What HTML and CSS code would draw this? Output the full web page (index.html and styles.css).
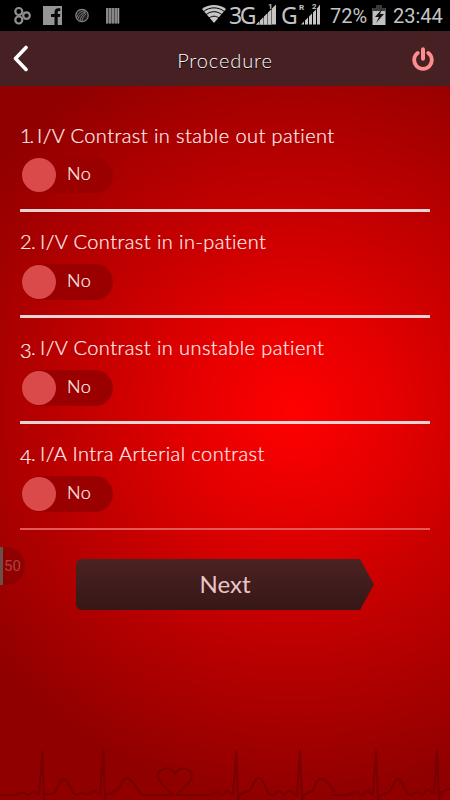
FILE: index.html
```html
<!DOCTYPE html>
<html lang="en">
<head>
    <meta charset="UTF-8">
    <meta name="viewport" content="width=device-width, initial-scale=1.0">
    <title>Procedure</title>
    <link rel="stylesheet" href="styles.css">
</head>
<body>
    <div class="screen">
        <!-- Status bar -->
        <div class="status-bar">
            <svg class="status-left" width="130" height="31" viewBox="0 0 130 31">
                <g fill="none" stroke="#909090" stroke-width="2.2">
                    <circle cx="18.800" cy="11.500" r="3.500"/>
                    <circle cx="18.800" cy="20" r="3.500"/>
                    <circle cx="26.500" cy="15.600" r="3.300"/>
                </g>
                <rect x="43" y="6" width="19" height="19" fill="#959595"/>
                <path d="M54.500 25v-8h-3.500v-3h3.500v-1.500c0-3 1.500-4.300 4-4.300h1.800v2.800h-1c-1.300 0-1.600.500-1.600 1.600v1.400h2.600l-.4 3h-2.200V25z" fill="#080808"/>
                <circle cx="82" cy="15.500" r="6.200" fill="#202020" stroke="#858585" stroke-width="1.200"/>
                <path d="M77 17c1-4 4-6 8-6M78 19c1-4 4-6 8-7M80 21c0-4 3-6 5-8M82 21c0-3 2-5 4-7" fill="none" stroke="#808080" stroke-width="0.900"/>
                <rect x="106" y="8" width="13" height="15.500" fill="#505050"/>
                <path d="M107 8v15.500M110 8v15.500M113 8v15.500M116 8v15.500M118.500 8v15.500" stroke="#9a9a9a" stroke-width="1.500"/>
            </svg>
            <div class="status-right">
                <svg class="wifi" width="26" height="31" viewBox="0 0 26 31">
                    <path d="M1 9C7.500 3.800 18.500 3.800 25 9L13 23z" fill="#c6c6c6"/>
                    <path d="M2.500 11.600c6-5 15-5 21 0M5 14.700c4.800-4 11.200-4 16 0M8 18.100c3.200-2.500 6.800-2.500 10 0" fill="none" stroke="#000" stroke-width="1"/>
                </svg>
                <span class="net net-3g">3G</span>
                <svg class="signal" width="21" height="31" viewBox="0 0 21 31">
                    <path d="M0 25L16 9v16z" fill="#686868"/>
                    <path d="M0 24.500l3-3v3zM4 20.500l3-3v7H4zM8 16.500l3-3v11H8zM12 12.500l3-3v15h-3zM16 8.500l4-4v20h-4z" fill="#c4c4c4"/>
                    <text x="12" y="9" class="sim">1</text>
                </svg>
                <span class="net net-g">G</span>
                <svg class="signal signal-roaming" width="22" height="31" viewBox="0 0 22 31">
                    <path d="M2 24.500l3-3v3zM6 20.500l3-3v7H6zM10 16.500l3-3v11h-3zM14 12.500l3-3v15h-3zM18 8.500l3-4v20h-3z" fill="#c4c4c4"/>
                    <text x="0" y="10" class="sim">R</text>
                    <text x="13" y="9" class="sim">2</text>
                </svg>
                <span class="percent">72%</span>
                <svg class="battery" width="14" height="31" viewBox="0 0 14 31">
                    <path d="M4 5h6v3h3.500v17H.5V8H4z" fill="#c0c0c0"/>
                    <path d="M4 5h6v3h3.500v3H.5V8H4z" fill="#3a3a3a"/>
                    <path d="M10 9l-7 8h4l-3 6 8-9H8z" fill="#111"/>
                </svg>
                <span class="clock">23:44</span>
            </div>
        </div>

        <!-- Title bar -->
        <header class="header">
            <svg width="16" height="27" viewBox="0 0 16 27">
                <path d="M13 2.500L2.500 13.500 13 24.500" fill="none" stroke="#fff" stroke-width="3.600" stroke-linejoin="round" stroke-linecap="round"/>
            </svg>
            <h1>Procedure</h1>
            <svg width="22" height="24" viewBox="0 0 22 24">
                <path d="M5.700 6A8.800 8.800 0 1 0 16.300 6" fill="none" stroke="#fe8e8e" stroke-width="3.800" stroke-linecap="round"/>
                <path d="M11 2.300v9.400" stroke="#fe8e8e" stroke-width="4" stroke-linecap="round"/>
            </svg>
        </header>

        <!-- Questions -->
        <main class="content">
            <section class="question q1">
                <h2><span class="num">1.</span>I/V Contrast in stable out patient</h2>
                <div class="toggle"><span class="knob"></span><span class="value">No</span></div>
            </section>
            <section class="question q2">
                <h2><span class="num">2.</span>I/V Contrast in in-patient</h2>
                <div class="toggle"><span class="knob"></span><span class="value">No</span></div>
            </section>
            <section class="question q3">
                <h2><span class="num"><span class="low">3</span>.</span>I/V Contrast in unstable patient</h2>
                <div class="toggle"><span class="knob"></span><span class="value">No</span></div>
            </section>
            <section class="question q4">
                <h2><span class="num"><span class="low">4</span>.</span>I/A Intra Arterial contrast</h2>
                <div class="toggle"><span class="knob"></span><span class="value">No</span></div>
            </section>
            <button class="next"><span>Next</span></button>
        </main>

        <!-- Floating side badge -->
        <div class="side-badge">50</div>

        <!-- Heartbeat line -->
        <svg class="heartbeat" width="450" height="56" viewBox="0 744 450 56">
            <path d="M0 795h14c3 0 5-2.500 8-2.500s3 2.500 6 2.500 3-4 5-4 4 4 6 4l3.300-44 1.700 50 1-7h7c7-2 6-15 12-15 5 0 7 16 12 16 3 0 3-2 6-2s3 1.500 6 1.500 3-3.500 6-3.500 4 4 6 4l3.300-45 1.700 49 2-5 4 0c2-3 4-3 6-4 4-3 5-12 9-12 6 0 9 9 16 17h31c-4-6-15-11-15-19 0-9 14-10 17-2 3-8 17-7 17 2 0 7-11 13-15 19h33c3 0 4-3 7-3 2 0 3 3 5 3s3-4 5-4 4 4 6 4l3.300-44 1.700 50 2-7c5 0 6-3 9-3 4-3 5-13 10-13 6 0 6 17 13 17 3 0 4-3.500 7-3.500s3 3 5 3 3-4 6-4 4 5 7 5l3-45 2 50 2-6c4 0 4-3 8-3 3-3 4-13 8-13 6 0 10 7 15 14" />
            <path d="M333 795h16c4 0 5-3 8-3s3 3 6 3 3-4 5-4 4 4 6 4l3-44 2 50 2-6c6 0 7-2 10-4 3-3 4-12 8-12 6 0 6 17 13 16 3 0 3-3 6-3s3 3 5 3 3-5 6-5 4 3 6 4l3-44 2 49 2-7c4 0 4-3 9-3" transform="translate(-1 0)"/>
        </svg>
    </div>
</body>
</html>
```
FILE: styles.css
```css
/* General Styles */
* {
    box-sizing: border-box;
}

body {
    margin: 0;
    font-family: Lato, "Open Sans", sans-serif;
    font-variant-ligatures: none;
    background: #900000;
}

.screen {
    position: relative;
    width: 450px;
    height: 800px;
    overflow: hidden;
    background: radial-gradient(circle at 293px 412px, #ff0000 0, #e40000 105px, #c60000 200px, #910000 385px);
}

/* Status Bar */
.status-bar {
    display: flex;
    justify-content: space-between;
    height: 31px;
    background: #000;
    color: #c4c4c4;
    font-family: Roboto, sans-serif;
}

.status-right {
    display: flex;
    align-items: flex-start;
    width: 249px;
    line-height: 31px;
}

.net {
    font-family: "Noto Sans", sans-serif;
    font-size: 23px;
    line-height: 30px;
    white-space: nowrap;
}

.net-3g {
    width: 27px;
    margin-left: 2px;
    letter-spacing: -2.5px;
}

.signal {
    flex: none;
}

.net-g {
    width: 18px;
    margin-left: 4px;
}

.sim {
    font: bold 8px Roboto, sans-serif;
    fill: #c4c4c4;
}

.percent {
    width: 38px;
    margin-left: 9px;
    font-size: 20px;
    line-height: 32px;
}

.battery {
    flex: none;
    margin-left: 4px;
}

.clock {
    margin-left: 7px;
    font-size: 20px;
    line-height: 32px;
}

/* Header */
.header {
    display: flex;
    align-items: center;
    justify-content: space-between;
    height: 55px;
    padding: 0 16px 0 13px;
    background: #462022;
}

.header h1 {
    margin: 2px 0 0 9px;
    font-size: 20px;
    font-weight: 300;
    letter-spacing: 0.9px;
    color: #fff;
    text-shadow: 0 1px 1px #000;
}

/* Questions */
.content {
    padding: 18px 20px 0;
}

.question {
    height: 106px;
    padding-top: 14px;
    border-bottom: 3px solid #e6d3d3;
}

.question h2 {
    margin: 0;
    height: 38px;
    font-size: 20px;
    font-weight: 300;
    line-height: 30px;
    letter-spacing: 0.43px;
    color: #fff0f0;
    -webkit-text-stroke: 0.2px #fff0f0;
    white-space: nowrap;
}

.num {
    display: inline-block;
    width: 20px;
    letter-spacing: -0.5px;
}

.q1 {
    height: 108px;
    padding-top: 16px;
}

.q1 h2 {
    height: 37px;
}

.q1 .num {
    width: 17px;
    letter-spacing: -2px;
}

.q4 {
    border-bottom: 2px solid #e65858;
}

.low {
    position: relative;
    top: 3px;
}

/* Toggle */
.toggle {
    display: flex;
    align-items: center;
    width: 91px;
    height: 36px;
    margin-left: 2px;
    border-radius: 18px;
    background: #9b0000;
}

.knob {
    width: 34px;
    height: 34px;
    border-radius: 50%;
    background: #da4a4a;
}

.value {
    margin: -4px 0 0 11px;
    font-size: 18px;
    font-weight: 300;
    letter-spacing: 0.5px;
    color: #fff0f0;
    -webkit-text-stroke: 0.2px #fff0f0;
}

/* Next Button */
.next {
    display: block;
    width: 298px;
    height: 51px;
    margin: 29px 0 0 56px;
    padding: 0 0 2px;
    border: 0;
    border-radius: 6px 0 0 6px;
    background: linear-gradient(#4c2223, #361716);
    clip-path: polygon(0 0, 284px 0, 100% 50%, 284px 100%, 0 100%);
    font-family: Lato, sans-serif;
    font-size: 24px;
    color: #eac6c6;
}

/* Side Badge */
.side-badge {
    position: absolute;
    left: 0;
    top: 547px;
    width: 25px;
    height: 38px;
    padding-left: 1px;
    border-left: 3px solid #6a5046;
    border-radius: 0 19px 19px 0;
    background: #8f0000;
    font: 15px/39px Roboto, sans-serif;
    color: #ad4343;
}

/* Heartbeat */
.heartbeat {
    position: absolute;
    left: 0;
    bottom: 0;
    fill: none;
    stroke: #700000;
    stroke-width: 2;
    stroke-linejoin: round;
    opacity: 0.75;
}
```
